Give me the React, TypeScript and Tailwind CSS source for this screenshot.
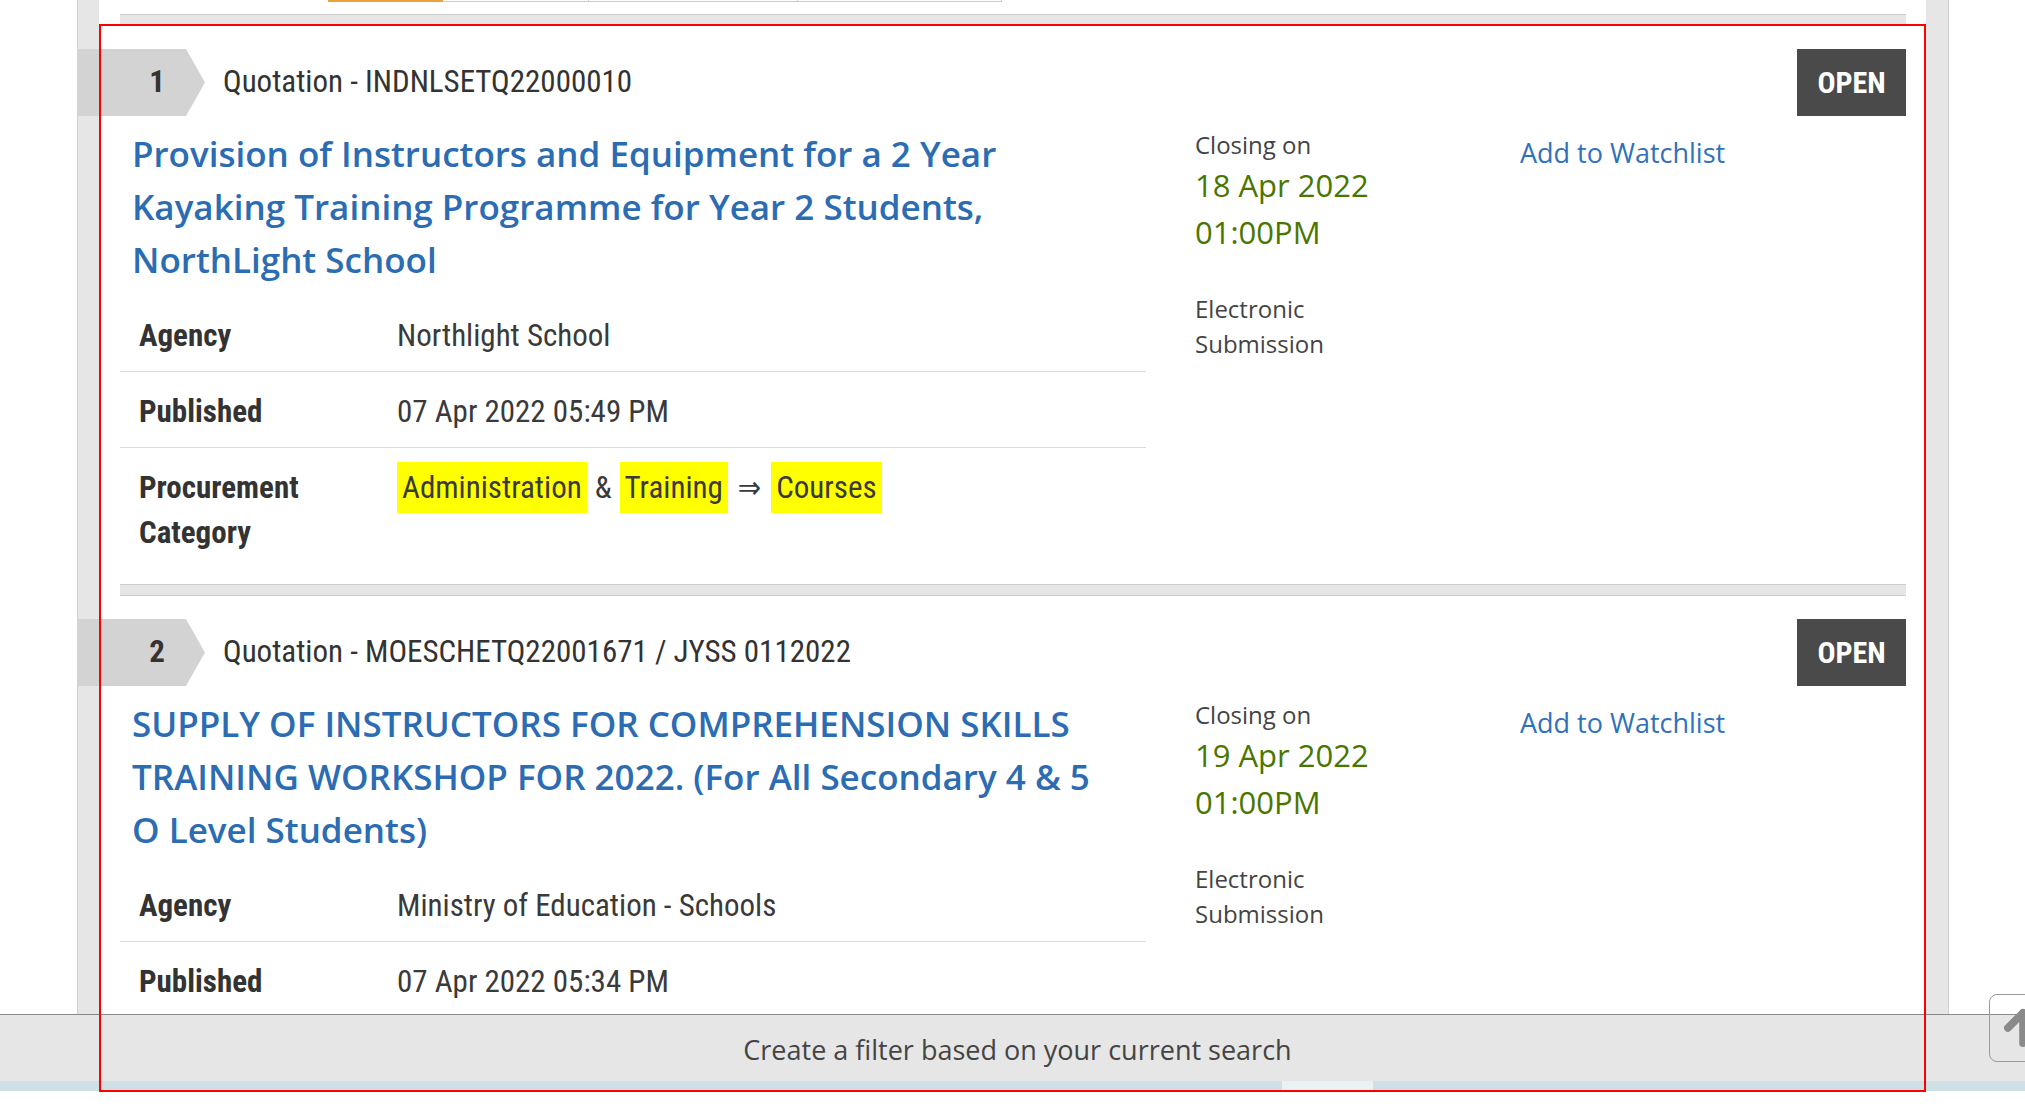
import { ArrowUp } from "lucide-react";

const condensed =
  "font-['Roboto_Condensed','Liberation_Sans_Narrow','DejaVu_Sans_Condensed',Roboto,sans-serif]";
const openSans = "font-['Open_Sans','Noto_Sans',sans-serif]";

type Tender = {
  no: number;
  ref: string;
  title: string;
  agency: string;
  published: string;
  closingDate: string;
  closingTime: string;
  showCategory?: boolean;
};

const tenders: Tender[] = [
  {
    no: 1,
    ref: "Quotation - INDNLSETQ22000010",
    title:
      "Provision of Instructors and Equipment for a 2 Year Kayaking Training Programme for Year 2 Students, NorthLight School",
    agency: "Northlight School",
    published: "07 Apr 2022 05:49 PM",
    closingDate: "18 Apr 2022",
    closingTime: "01:00PM",
    showCategory: true,
  },
  {
    no: 2,
    ref: "Quotation - MOESCHETQ22001671 / JYSS 0112022",
    title:
      "SUPPLY OF INSTRUCTORS FOR COMPREHENSION SKILLS TRAINING WORKSHOP FOR 2022. (For All Secondary 4 & 5 O Level Students)",
    agency: "Ministry of Education - Schools",
    published: "07 Apr 2022 05:34 PM",
    closingDate: "19 Apr 2022",
    closingTime: "01:00PM",
  },
];

function Separator() {
  return <div className="h-[12px] bg-[#e6e6e6] border-y border-[#cccccc]" />;
}

function Row({ label, children, last }: { label: React.ReactNode; children: React.ReactNode; last?: boolean }) {
  return (
    <div className={last ? "flex pt-[17px] pb-[13px] leading-[45px]" : "flex pt-[17px] pb-[13px] leading-[45px] border-b border-[#dcdcdc]"}>
      <div className="w-[277px] shrink-0 pl-[19px] font-bold text-[#333]">{label}</div>
      <div className="flex-1 text-[#3a3a3a]">{children}</div>
    </div>
  );
}

function TenderItem({ t }: { t: Tender }) {
  return (
    <div className="pt-[23px] pb-[16px]">
      <div className="flex items-center h-[67px] -ml-[43px]">
        <div className="w-[128px] h-[67px] shrink-0 bg-[#d3d3d3] flex items-center [clip-path:polygon(0_0,109px_0,100%_50%,109px_100%,0_100%)]">
          <span className={`${condensed} w-[160px] shrink-0 text-center text-[31px] font-bold text-[#333]`}>{t.no}</span>
        </div>
        <span className={`${condensed} ml-[18px] text-[31px] text-[#333]`}>{t.ref}</span>
        <span className={`${condensed} ml-auto w-[109px] h-[67px] bg-[#4a4a4a] text-white font-bold text-[30px] flex items-center justify-center`}>
          OPEN
        </span>
      </div>

      <div className="flex mt-[11px]">
        <div className="w-[1026px] shrink-0">
          <h3 className={`${openSans} pl-[12px] pr-[36px] text-[35px] font-semibold leading-[53px] text-[#2b6cb3]`}>{t.title}</h3>
          <div className={`${condensed} mt-[10px] text-[31px]`}>
            <Row label="Agency">{t.agency}</Row>
            <Row label="Published" last={!t.showCategory}>{t.published}</Row>
            {t.showCategory && (
              <Row
                last
                label={
                  <>
                    Procurement
                    <br />
                    Category
                  </>
                }
              >
                <span className="bg-[#ffff00] px-[5px] py-[7px]">Administration</span>
                <span className="mx-[8px]">&amp;</span>
                <span className="bg-[#ffff00] px-[5px] py-[7px]">Training</span>
                <span className="mx-[10px]">⇒</span>
                <span className="bg-[#ffff00] px-[5px] py-[7px]">Courses</span>
              </Row>
            )}
          </div>
        </div>

        <div className={`${openSans} ml-[49px] w-[325px] shrink-0`}>
          <p className="text-[24px] leading-[35px] text-[#444]">Closing on</p>
          <p className="text-[31px] leading-[47px] text-[#4a7600]">{t.closingDate}</p>
          <p className="text-[31px] leading-[47px] text-[#4a7600]">{t.closingTime}</p>
          <p className="mt-[35px] w-[200px] text-[24px] leading-[35px] text-[#444]">Electronic Submission</p>
        </div>

        <div className={`${openSans} mt-[8px] text-[27px] leading-[36px] text-[#2f72bb]`}>Add to Watchlist</div>
      </div>
    </div>
  );
}

export default function App() {
  return (
    <div className="relative w-[2025px] h-[1117px] overflow-hidden bg-white flex flex-col">
      <div className="h-[1014px] shrink-0 flex overflow-hidden">
        <div className="w-[77px] shrink-0" />
        <div className="w-[22px] shrink-0 bg-[#e6e6e6] border-l border-[#cfcfcf]" />
        <main className="w-[1827px] shrink-0 bg-white pl-[21px] pr-[20px]">
          <div className="flex h-[2px] ml-[208px]">
            <div className="w-[115px] bg-[#e8a33a]" />
            <div className="w-[146px] border-b border-r border-[#cccccc]" />
            <div className="w-[209px] border-b border-r border-[#cccccc]" />
            <div className="w-[204px] border-b border-r border-[#cccccc]" />
          </div>
          <div className="mt-[12px]">
            {tenders.map((t) => (
              <div key={t.no}>
                <Separator />
                <TenderItem t={t} />
              </div>
            ))}
          </div>
        </main>
        <div className="w-[23px] shrink-0 bg-[#e6e6e6] border-r border-[#cfcfcf]" />
        <div className="flex-1" />
      </div>

      <div className={`${openSans} h-[67px] shrink-0 border-t border-[#8a8a8a] bg-[#e6e6e6] flex items-center justify-center pt-[4px] pl-[10px] text-[27px] text-[#444]`}>
        Create a filter based on your current search
      </div>
      <div className="h-[10px] shrink-0 bg-[#cde0e6] flex">
        <div className="w-[1282px]" />
        <div className="w-[91px] bg-[#e9f2f4]" />
      </div>

      <div className="absolute left-[99px] top-[24px] w-[1827px] h-[1068px] border-2 border-[#ff0000] pointer-events-none" />

      <div className="absolute left-[1989px] top-[994px] w-[68px] h-[68px] rounded-[8px] border border-[#999] flex items-center justify-center">
        <ArrowUp size={52} strokeWidth={3.5} className="text-[#8a8a8a]" />
      </div>
    </div>
  );
}
